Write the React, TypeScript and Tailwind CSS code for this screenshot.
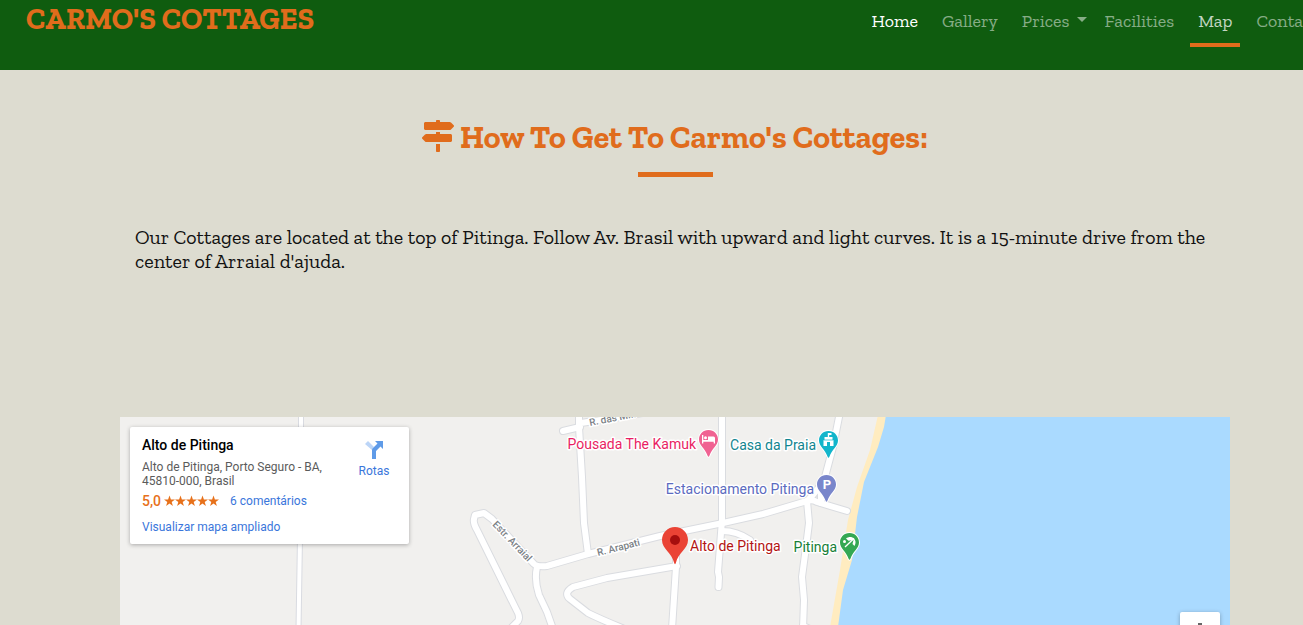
import type { ReactNode } from "react";
import { FaMapSigns } from "react-icons/fa";

const slab = "font-['Zilla_Slab','DejaVu_Serif_Condensed','DejaVu_Serif',serif]";

function NavLink({ children, tone = "px-2 text-white/50" }: { children: ReactNode; tone?: string }) {
  return (
    <li>
      <a href="#" className={`flex h-[47px] items-start border-b-4 pt-[9px] ${tone}`}>
        {children}
      </a>
    </li>
  );
}

function Header() {
  return (
    <header className="flex h-[70px] shrink-0 items-start justify-between bg-[#0f5c0f] pr-6 pl-[26px]">
      <a href="#" className="pt-[3px] text-[30px] leading-8 font-bold whitespace-nowrap text-[#e06c1c]">
        CARMO'S COTTAGES
      </a>
      <nav>
        <ul className="flex gap-2 text-lg leading-6 whitespace-nowrap">
          <NavLink tone="border-transparent px-2 text-white">Home</NavLink>
          <NavLink tone="border-transparent px-2 text-white/50">Gallery</NavLink>
          <NavLink tone="border-transparent pl-2 text-white/50">
            Prices
            <span className="mt-2 mr-px ml-2 border-x-5 border-t-5 border-x-transparent border-t-white/50" />
          </NavLink>
          <NavLink tone="border-transparent px-2 text-white/50">Facilities</NavLink>
          <NavLink tone="border-[#e06c1c] px-2 text-white/75">Map</NavLink>
          <NavLink tone="border-transparent px-2 text-white/50">Contact</NavLink>
        </ul>
      </nav>
    </header>
  );
}

const roads = [
  "M443 14L460 10M461 6L500 0L545 -8",
  "M459 -5L459 10L462 60L464 106L468 137",
  "M392 210L398 204Q400 201 398 196L395 190L357 113Q353 106 354 102L355 98L364 96L372 102L414 147Q417 150 427 149L468 137L540 119L603 106L643 97L687 84Q692 82 697 85L727 94",
  "M417 150Q414 163 419 178L427 195L433 212",
  "M557 149L487 161L453 170Q443 176 450 182L468 196Q480 202 502 211",
  "M556 135L556 150L552 212",
  "M602 -5L602 103L598 155L599 160L598.500 170",
  "M602 114Q617 114 630 123",
  "M720 -5L713 30L705 60Q698 74 687 84L689 106L686 130L682 160L684 183L683 212",
  "M701 65L701 86M683 209L690 212",
];

function Pin({ x, y, color, children }: { x: number; y: number; color: string; children: ReactNode }) {
  return (
    <g transform={`translate(${x} ${y})`}>
      <path
        d="M0 0C-5.500 0-9.500 4.200-9.500 9.500C-9.500 15.500-3.500 18-1 25.500Q0 28 1 25.500C3.500 18 9.500 15.500 9.500 9.500C9.500 4.200 5.500 0 0 0Z"
        fill={color}
        stroke="#fff"
        strokeWidth="2"
        paintOrder="stroke"
      />
      {children}
    </g>
  );
}

function MapDrawing() {
  return (
    <svg className="absolute inset-0 size-full font-[Roboto,sans-serif]" aria-label="Map of Pitinga">
      <path d="M758 -2L750 33L737 70L728 103L720 153L710 210V900H3000V-2Z" fill="#ffecc0" />
      <path d="M766 -2L764 10L758 30L744 65L737 100L732 143L723 173L718 210V900H3000V-2Z" fill="#aadaff" />
      <g fill="none" strokeLinecap="round" strokeLinejoin="round">
        <path d="M181 -5L181 30L180 120L178.500 212" stroke="#d9dbe1" strokeWidth="6" />
        <path d="M181 -5L181 30L180 120L178.500 212" stroke="#fff" strokeWidth="4" />
        {roads.map((d) => (
          <path key={d} d={d} stroke="#dadce0" strokeWidth="8" />
        ))}
        {roads.map((d) => (
          <path key={d} d={d} stroke="#fff" strokeWidth="6" />
        ))}
      </g>
      <g fontSize="10" fontWeight="500" fill="#7b8186" stroke="#fff" strokeWidth="3" paintOrder="stroke" strokeLinejoin="round">
        <text transform="translate(470 9) rotate(-11)">R. das M...</text>
        <text transform="translate(478 139) rotate(-14)">R. Arapati</text>
        <text transform="translate(372 108) rotate(46)">Estr. Arraial</text>
      </g>
      <Pin x={588.5} y={13} color="#f06292">
        <path d="M-6.500 5H-5.200V10H-.5V6.500H5Q6.500 6.500 6.500 8V13.500H5.200V11.800H-5.200V13.500H-6.500Z" fill="#fff" />
        <circle cx="-3" cy="7.800" r="1.500" fill="#fff" />
      </Pin>
      <Pin x={708.5} y={14} color="#12b5cb">
        <path d="M-.7 2H3V4H.7V6H4V9H5V15H1.500V11H-1.500V15H-5V9H-4V6H-.7Z" fill="#fff" />
        <path d="M-5 9H5" stroke="#12b5cb" strokeWidth=".7" />
      </Pin>
      <Pin x={706.5} y={58} color="#7986cb">
        <text x="0.500" y="14" textAnchor="middle" fontSize="13" fontWeight="700" fill="#fff">P</text>
      </Pin>
      <Pin x={729.5} y={116} color="#34a853">
        <path d="M-3.500 5.500C-1 3.500 2.500 3.500 4.500 5.500C6.500 7.500 6.500 10.500 5 13L3 11L4 7L-1 7.800Z" fill="#fff" />
        <path d="M4.500 5.500L-4.500 14" stroke="#fff" strokeWidth="1.300" />
        <circle cx="-5" cy="8.500" r="1.500" fill="#fff" />
      </Pin>
      <path d="M555 110C547.500 110 542 116 542 123C542 132 552 136 554 145.500Q555 149 556 145.500C558 136 568 132 568 123C568 116 562.500 110 555 110Z" fill="#ea4335" />
      <circle cx="555" cy="123" r="5" fill="#a50e0e" />
      <g fontSize="14" stroke="#fff" strokeWidth="3" paintOrder="stroke" strokeLinejoin="round">
        <text x="576" y="32" textAnchor="end" fill="#e91e63">Pousada The Kamuk</text>
        <text x="696" y="33" textAnchor="end" fill="#12858f">Casa da Praia</text>
        <text x="694" y="77" textAnchor="end" fill="#5c6bc0">Estacionamento Pitinga</text>
        <text x="570" y="134" fill="#b31412">Alto de Pitinga</text>
        <text x="717" y="135" textAnchor="end" fill="#188038">Pitinga</text>
      </g>
    </svg>
  );
}

function PlaceCard() {
  return (
    <div className="absolute top-2.5 left-2.5 flex h-[117px] w-[279px] justify-between rounded-xs bg-white pt-2.5 pr-4 pl-3 font-[Roboto,sans-serif] text-xs leading-[14px] shadow-[0_1px_4px_rgba(0,0,0,0.3)]">
      <div>
        <h2 className="text-sm leading-4 font-medium text-black">Alto de Pitinga</h2>
        <p className="mt-[7px] w-[200px] text-[#5b5b5b]">Alto de Pitinga, Porto Seguro - BA, 45810-000, Brasil</p>
        <div className="mt-[5px] flex items-center">
          <span className="text-sm leading-4 font-medium text-[#e7711b]">5,0</span>
          <svg className="ml-[3px] h-3 w-[55px]" viewBox="0 0 55 12" fill="#e7711b" role="img" aria-label="5 stars">
            {[0, 11, 22, 33, 44].map((x) => (
              <path key={x} transform={`translate(${x} 0)`} d="M5.500 .5L6.900 4.400H11L7.700 6.900L8.900 11L5.500 8.600L2.100 11L3.300 6.900L0 4.400H4.100Z" />
            ))}
          </svg>
          <a href="#" className="ml-[11px] text-[#3a76db]">6 comentários</a>
        </div>
        <a href="#" className="mt-[11px] block text-[#3a76db]">Visualizar mapa ampliado</a>
      </div>
      <a href="#" className="flex w-[38px] flex-col items-center pt-1 text-[#3a76db]">
        <svg width="18" height="18" viewBox="0 0 18 18">
          <path d="M0 3L3 0L9 6L7 9Z" fill="#bcd5f7" />
          <path d="M10 0H18V8L15.500 5.500L11 10V18H7V9Q7 8 8 7L12.500 2.500Z" fill="#5f9be8" />
        </svg>
        <span className="mt-[5px]">Rotas</span>
      </a>
    </div>
  );
}

export default function App() {
  return (
    <div className={`h-screen overflow-hidden bg-[#dddcd0] ${slab}`}>
      <div className="-mr-[47px] flex h-full flex-col">
        <Header />
        <main className="flex min-h-0 flex-1 flex-col px-[120px]">
          <div className="flex flex-col items-center pt-[47px]">
            <h1 className="flex items-center gap-1.5 text-[32px] leading-10 font-bold whitespace-nowrap text-[#e06c1c]">
              <FaMapSigns className="mb-0.5 size-8" />
              How To Get To Carmo's Cottages:
            </h1>
            <hr className="mt-[15px] h-[5px] w-[75px] border-0 bg-[#e06c1c]" />
          </div>
          <p className="mt-12 h-[145px] px-[15px] text-xl leading-6 text-[#111]">
            Our Cottages are located at the top of Pitinga. Follow Av. Brasil with upward and light curves. It is a
            15-minute drive from the center of Arraial d'ajuda.
          </p>
          <section className="relative mt-[47px] min-h-0 flex-1 overflow-hidden bg-[#f1f0ee]">
            <MapDrawing />
            <PlaceCard />
            <button
              type="button"
              aria-label="Zoom in"
              className="absolute top-[195px] right-2.5 flex size-10 items-center justify-center rounded-xs bg-white shadow-[0_1px_4px_rgba(0,0,0,0.3)]"
            >
              <svg width="18" height="18" viewBox="0 0 18 18" fill="#666">
                <path d="M7 0H11V7H18V11H11V18H7V11H0V7H7Z" />
              </svg>
            </button>
          </section>
        </main>
      </div>
    </div>
  );
}
